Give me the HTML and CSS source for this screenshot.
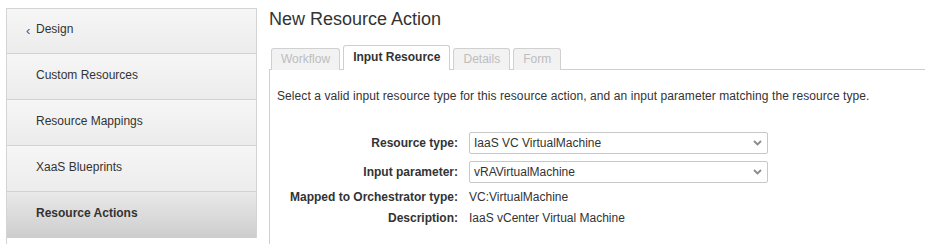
FILE: index.html
```html
<!DOCTYPE html>
<html lang="en">
<head>
    <meta charset="UTF-8">
    <meta name="viewport" content="width=device-width, initial-scale=1.0">
    <title>New Resource Action</title>
    <link rel="stylesheet" href="styles.css">
</head>
<body>
    <div class="sidebar">
        <div class="nav-item back"><span class="back-arrow">&lsaquo;</span>Design</div>
        <div class="nav-item">Custom Resources</div>
        <div class="nav-item">Resource Mappings</div>
        <div class="nav-item">XaaS Blueprints</div>
        <div class="nav-item active">Resource Actions</div>
    </div>

    <div class="main">
        <h1 class="page-title">New Resource Action</h1>
        <div class="tabs">
            <div class="tab">Workflow</div>
            <div class="tab active">Input Resource</div>
            <div class="tab">Details</div>
            <div class="tab">Form</div>
        </div>
        <div class="panel">
            <p class="intro">Select a valid input resource type for this resource action, and an input parameter matching the resource type.</p>
            <div class="form-grid">
                <label class="form-label">Resource type:</label>
                <div class="select-box">
                    <span>IaaS VC VirtualMachine</span>
                    <svg class="chevron" width="9" height="6" viewBox="0 0 9 6"><path d="M1 1 L4.5 4.5 L8 1" fill="none" stroke="#8a8a8a" stroke-width="1.8"/></svg>
                </div>
                <label class="form-label">Input parameter:</label>
                <div class="select-box">
                    <span>vRAVirtualMachine</span>
                    <svg class="chevron" width="9" height="6" viewBox="0 0 9 6"><path d="M1 1 L4.5 4.5 L8 1" fill="none" stroke="#8a8a8a" stroke-width="1.8"/></svg>
                </div>
                <div class="form-label text-row">Mapped to Orchestrator type:</div>
                <div class="form-value text-row">VC:VirtualMachine</div>
                <div class="form-label text-row">Description:</div>
                <div class="form-value text-row">IaaS vCenter Virtual Machine</div>
            </div>
        </div>
    </div>
</body>
</html>
```

FILE: styles.css
```css
body{
    margin: 0;
    display: flex;
    height: 244px;
    overflow: hidden;
    font-family: "Liberation Sans", Arial, sans-serif;
    font-size: 12px;
    color: #333;
    background-color: #fff;
}
.sidebar{
    margin: 8px 0 0 6px;
    width: 251px;
    border-left: 1px solid #d4d4d4;
    border-top: 1px solid #d4d4d4;
    box-sizing: border-box;
}
.nav-item{
    height: 45px;
    box-sizing: border-box;
    display: flex;
    align-items: center;
    padding: 0 0 4px 29px;
    border-bottom: 1px solid #d2d2d2;
    border-right: 1px solid #d4d4d4;
    background: linear-gradient(#f6f6f6, #ececec);
}
.nav-item + .nav-item{
    height: 46px;
}
.back{
    position: relative;
}
.back-arrow{
    position: absolute;
    left: 19px;
    top: 14px;
    font-size: 13px;
    color: #555;
}
.nav-item.active{
    font-weight: bold;
    background: linear-gradient(#e9e9e9, #cdcdcd);
    border-bottom: none;
}
.main{
    flex: 1;
    margin-left: 12px;
}
.page-title{
    margin: 8px 0 0 0;
    font-size: 18px;
    line-height: 22px;
    font-weight: normal;
    color: #333;
}
.tabs{
    display: flex;
    align-items: flex-end;
    gap: 3px;
    margin: 15px 0 -1px 2px;
    position: relative;
    z-index: 1;
}
.tab{
    height: 21px;
    line-height: 21px;
    padding: 0 9px;
    border: 1px solid #d0d0d0;
    border-bottom: none;
    border-radius: 3px 3px 0 0;
    background-color: #f2f2f2;
    color: #bdbdbd;
}
.tab.active{
    height: 24px;
    line-height: 23px;
    background-color: #fff;
    color: #333;
    font-weight: bold;
    border-color: #cfcfcf;
}
.panel{
    border-top: 1px solid #cfcfcf;
    border-left: 1px solid #cfcfcf;
    padding: 19px 0 0 7px;
    height: 175px;
    box-sizing: border-box;
}
.intro{
    margin: 0;
    line-height: 14px;
    letter-spacing: 0.08px;
}
.form-grid{
    display: grid;
    grid-template-columns: 181px 299px;
    column-gap: 11px;
    row-gap: 7px;
    align-items: center;
    margin-top: 29px;
}
.form-label{
    text-align: right;
    font-weight: bold;
}
.text-row{
    line-height: 14px;
}
.select-box{
    height: 20px;
    border: 1px solid #c8c8c8;
    border-radius: 2px;
    display: flex;
    align-items: center;
    justify-content: space-between;
    padding: 0 5px 0 4px;
}
.chevron{
    display: block;
}
```
